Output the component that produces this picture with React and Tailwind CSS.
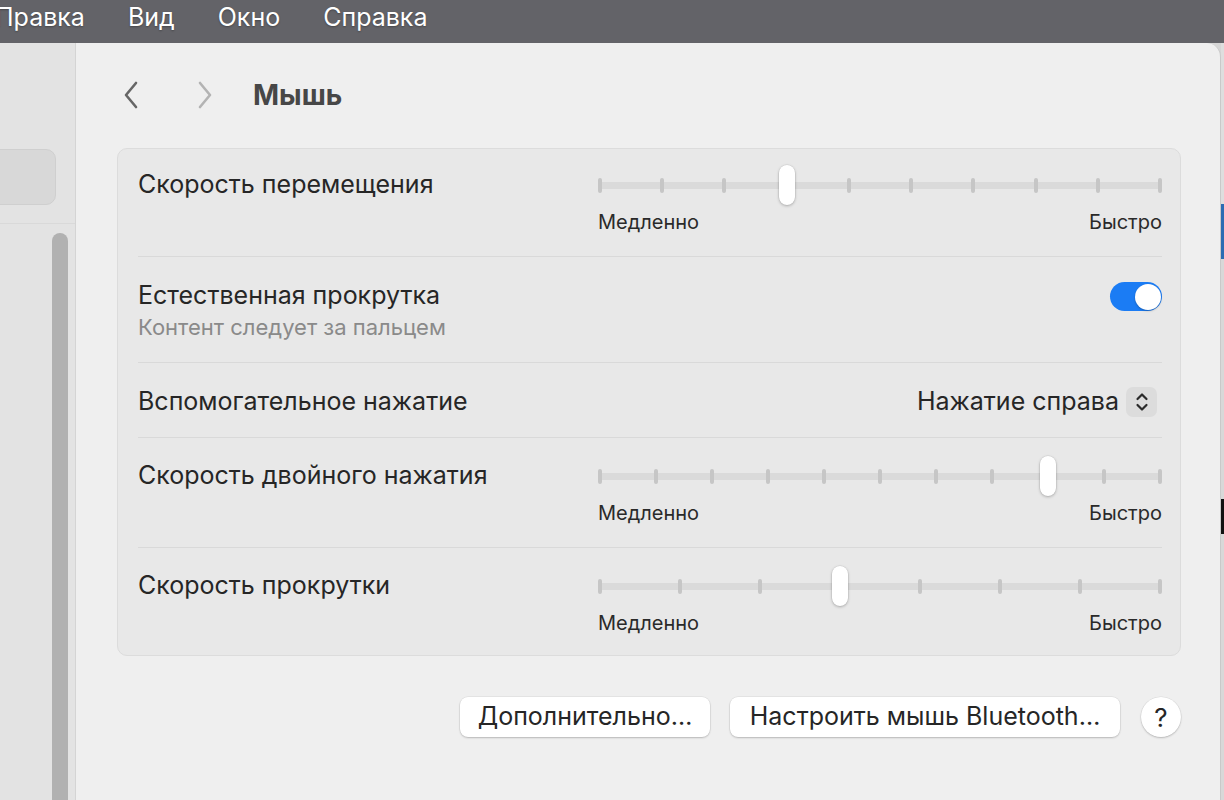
import { useState } from 'react';

const MENU = ['Правка', 'Вид', 'Окно', 'Справка'];

const FONT = { fontFamily: 'Inter, "Noto Sans", sans-serif' };

function Chevron({ dir, className }) {
  const d = dir === 'left' ? 'M13 2 L3 14 L13 26' : 'M3 2 L13 14 L3 26';
  return (
    <svg width="16" height="28" viewBox="0 0 16 28" className={className}>
      <path d={d} fill="none" stroke="currentColor" strokeWidth="2.6" strokeLinecap="round" strokeLinejoin="round" />
    </svg>
  );
}

function Slider({ ticks, value }) {
  // tick i sits at 2 + i * (564 - 4) / (ticks - 1) inside the 564px rail
  const center = 2 + (value * 560) / (ticks - 1);
  return (
    <div className="w-[564px]">
      <div className="relative h-[40px] flex items-center">
        <div className="w-full h-[7px] rounded-full bg-[#dadada] flex items-center justify-between">
          {Array.from({ length: ticks }).map((_, i) => (
            <span key={i} className="w-[4px] h-[15px] rounded-full bg-[#c6c6c6]" />
          ))}
        </div>
        <span
          className="absolute top-0 h-[40px] w-[16px] rounded-full bg-white shadow-[0_1px_3px_rgba(0,0,0,0.25),0_0_0_0.5px_rgba(0,0,0,0.08)]"
          style={{ left: center - 8 }}
        />
      </div>
      <div className="mt-[5px] flex justify-between text-[20px] leading-[24px] text-[#2a2a2a]">
        <span>Медленно</span>
        <span>Быстро</span>
      </div>
    </div>
  );
}

function SliderRow({ label, ticks, value, className }) {
  return (
    <div className={`flex items-start justify-between ${className}`}>
      <div className="h-[40px] flex items-center text-[25px] text-[#262626]">{label}</div>
      <Slider ticks={ticks} value={value} />
    </div>
  );
}

function Toggle({ on, onChange }) {
  return (
    <button
      onClick={() => onChange(!on)}
      className={`mt-[1px] w-[52px] h-[29px] rounded-full p-[1.5px] flex ${on ? 'justify-end bg-[#1b7cf4]' : 'justify-start bg-[#d3d3d3]'}`}
    >
      <span className="w-[26px] h-[26px] rounded-full bg-white shadow-[0_1px_2px_rgba(0,0,0,0.25)]" />
    </button>
  );
}

function Stepper() {
  return (
    <span className="w-[31px] h-[30px] rounded-[7px] bg-[#dcdcdc] flex items-center justify-center">
      <svg width="14" height="22" viewBox="0 0 14 22">
        <path d="M2.5 8 L7 3.5 L11.5 8 M2.5 14 L7 18.5 L11.5 14" fill="none" stroke="#2a2a2a" strokeWidth="2.2" strokeLinecap="round" strokeLinejoin="round" />
      </svg>
    </span>
  );
}

export default function App() {
  const [natural, setNatural] = useState(true);

  return (
    <div className="w-[1224px] h-[800px] overflow-hidden flex flex-col bg-[#d6d6d6]" style={FONT}>
      {/* system menu bar */}
      <div className="h-[43px] shrink-0 bg-[#636368] flex items-center gap-[43px] ml-[-5px] pr-[5px] pb-[7px] text-[25px] text-white [text-shadow:0_1px_2px_rgba(0,0,0,0.3)]">
        {MENU.map((m) => (
          <span key={m}>{m}</span>
        ))}
      </div>

      <div className="flex-1 flex min-h-0">
        {/* sidebar */}
        <aside className="w-[76px] shrink-0 bg-[#e3e3e3] border-r border-[#d4d4d4] flex flex-col overflow-hidden">
          <div className="shrink-0 ml-[-12px] mt-[106px] w-[68px] h-[56px] rounded-[10px] bg-[#d8d8d8] border border-[#cfcfcf]" />
          <div className="shrink-0 mt-[18px] h-px bg-[#d9d9d9]" />
          <div className="shrink-0 mt-[9px] flex justify-end pr-[7px]">
            <div className="w-[16px] h-[600px] rounded-full bg-[#b1b1b1]" />
          </div>
        </aside>

        {/* settings pane */}
        <main className="w-[1145px] shrink-0 bg-[#efefef] rounded-tr-[14px] border-r border-[#c9c9c9] pt-[38px] pl-[41px] pr-[39px]">
          <div className="h-[28px] flex items-center pl-[6px]">
            <Chevron dir="left" className="text-[#666666]" />
            <Chevron dir="right" className="ml-[58px] text-[#b3b3b3]" />
            <h1 className="ml-[40px] text-[28px] font-bold text-[#474747] leading-none">Мышь</h1>
          </div>

          <section className="mt-[39px] rounded-[10px] bg-[#e8e8e8] border border-[#dcdcdc] pl-5 pr-[18px]">
            <SliderRow label="Скорость перемещения" ticks={10} value={3} className="pt-[16px] pb-[22px]" />

            <div className="border-t border-[#d9d9d9] pt-[24px] pb-[23px] flex items-start justify-between">
              <div>
                <div className="text-[25px] leading-[28px] text-[#262626]">Естественная прокрутка</div>
                <div className="mt-[6px] text-[22px] leading-[24px] text-[#8a8a8a]">Контент следует за пальцем</div>
              </div>
              <Toggle on={natural} onChange={setNatural} />
            </div>

            <div className="border-t border-[#d9d9d9] h-[75px] pt-[3px] flex items-center justify-between">
              <span className="text-[25px] text-[#262626]">Вспомогательное нажатие</span>
              <div className="flex items-center gap-[7px] mr-[5px] text-[25px] text-[#262626]">
                <span>Нажатие справа</span>
                <Stepper />
              </div>
            </div>

            <SliderRow label="Скорость двойного нажатия" ticks={11} value={8} className="border-t border-[#d9d9d9] pt-[18px] pb-[22px]" />
            <SliderRow label="Скорость прокрутки" ticks={8} value={3} className="border-t border-[#d9d9d9] pt-[18px] pb-[20px]" />
          </section>

          <div className="mt-[41px] flex items-center justify-end gap-[20px] text-[25px] text-[#262626]">
            <button className="h-[40px] w-[250px] rounded-[8px] bg-white shadow-[0_1px_2px_rgba(0,0,0,0.2),0_0_0_0.5px_rgba(0,0,0,0.08)]">
              Дополнительно…
            </button>
            <button className="h-[40px] w-[390px] rounded-[8px] bg-white shadow-[0_1px_2px_rgba(0,0,0,0.2),0_0_0_0.5px_rgba(0,0,0,0.08)]">
              Настроить мышь Bluetooth…
            </button>
            <button className="ml-px h-[40px] w-[40px] rounded-full bg-white text-[26px] shadow-[0_1px_2px_rgba(0,0,0,0.2),0_0_0_0.5px_rgba(0,0,0,0.08)]">
              ?
            </button>
          </div>
        </main>

        {/* window behind, peeking out on the right */}
        <div className="flex-1 flex flex-col">
          <div className="h-[161px] bg-[#dedede]" />
          <div className="h-[55px] bg-[#2b6cb3]" />
          <div className="h-[240px] bg-[#d8d8d8]" />
          <div className="h-[35px] bg-[#111111]" />
          <div className="flex-1 bg-[#d8d8d8]" />
        </div>
      </div>
    </div>
  );
}
